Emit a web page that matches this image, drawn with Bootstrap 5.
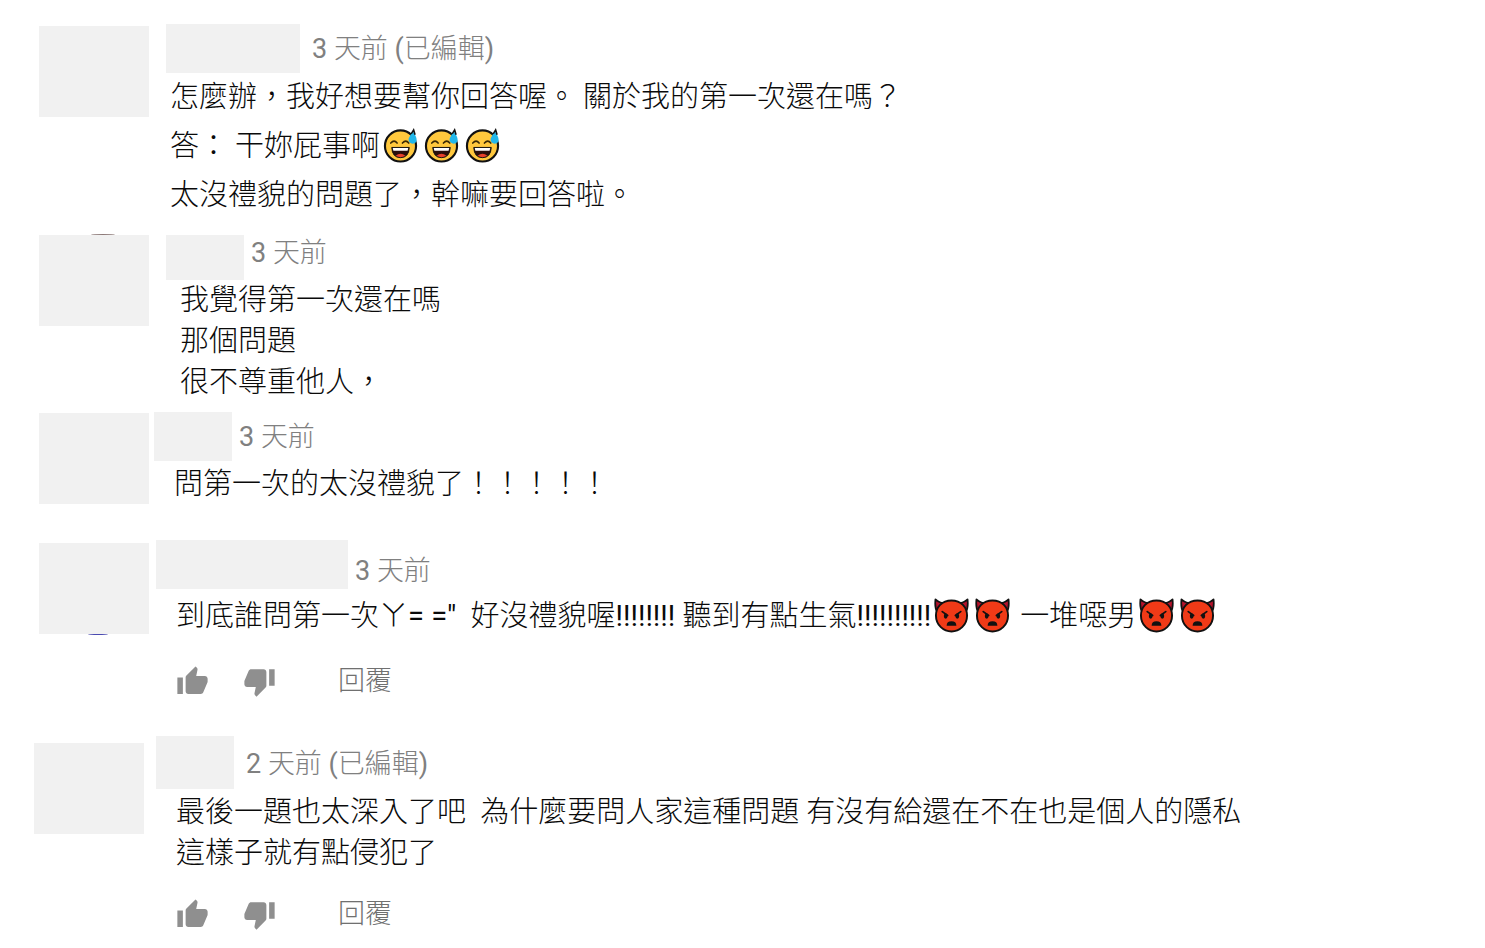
<!DOCTYPE html>
<html lang="zh-Hant">
<head>
<meta charset="utf-8">
<meta name="viewport" content="width=device-width, initial-scale=1">
<title>留言</title>
<link href="https://cdn.jsdelivr.net/npm/bootstrap@5.3.0/dist/css/bootstrap.min.css" rel="stylesheet">
<style>
  body { background: #fff; color: #0a0a0a; font-family: Roboto, "Noto Sans CJK TC", sans-serif; font-size: 29px; font-weight: 300; }
  .thread { padding: 24px 34px 10px; }
  .comment { padding-left: 5px; }
  .comment-flush { padding-left: 0; }
  .after-9 { padding-bottom: 9px; } .after-15 { padding-bottom: 15px; } .after-35 { padding-bottom: 35px; }
  .avatar { position: relative; width: 110px; height: 91px; background: #f1f1f1; }
  .drop-1 { margin-top: 1px; } .drop-2 { margin-top: 2px; } .drop-3 { margin-top: 3px; } .drop-7 { margin-top: 7px; }
  .avatar-peek-top::before, .avatar-peek-bottom::after { content: ""; position: absolute; height: 2px; }
  .avatar-peek-top::before { left: 52px; top: -1px; width: 24px; border-top: 1px solid #8d7a78; border-radius: 50%; }
  .avatar-peek-bottom::after { left: 49px; bottom: -1px; width: 20px; border-bottom: 1px solid #4a4ab0; border-radius: 50%; }
  .author { background: #f1f1f1; }
  .author-xs { width: 78px; }
  .author-md { width: 134px; }
  .author-lg { width: 192px; }
  .stamp { color: #808080; font-size: 27px; line-height: 40px; }
  .stamp-high { line-height: 36px; }
  .stamp-tall { line-height: 49px; }
  .stamp-row { height: 49px; }
  .stamp-row-sm { height: 45px; }
  .stamp-row-lg { height: 53px; }
  .words { line-height: 41px; white-space: pre-wrap; }
  .words-loose { line-height: 49px; }
  .emo { width: 35px; height: 35px; margin: 0 3px; vertical-align: -7px; }
  .actions { padding-top: 20px; }
  .tool { padding: 0; border: 0; background: none; color: #8f8f8f; line-height: 1; }
  .tool svg { display: block; width: 33px; height: 33px; fill: currentColor; }
  .tool-down { margin-left: 34px; }
  .reply { font-size: 27px; line-height: 40px; font-weight: 300; color: #707070; margin-left: 62px; }
  .g-5 { margin-left: 5px; } .g-7 { margin-left: 7px; } .g-12 { margin-left: 12px; } .g-17 { margin-left: 17px; }
  .in-4 { padding-left: 4px; } .in-14 { padding-left: 14px; } .in-20 { padding-left: 20px; }
</style>
</head>
<body>
<svg class="d-none" aria-hidden="true">
  <symbol id="sweat" viewBox="0 0 36 36">
    <circle cx="18" cy="18.500" r="16" fill="#ffc83d" stroke="#111" stroke-width="2.200"/>
    <path d="M8 15.500q3.500-4 6.500 0M20 15.500q3.500-4 6.500 0" fill="none" stroke="#3a2a05" stroke-width="1.600" stroke-linecap="round"/>
    <path d="M9 20h18q-.5 10.500-9 10.500T9 20z" fill="#2a0f0c" stroke="#111" stroke-width="1"/>
    <path d="M10 20.500h16l-.7 3h-14.600z" fill="#fff"/>
    <path d="M13 28.500q5-4 10 0-5 3-10 0z" fill="#e8402a"/>
    <path d="M30.500 3q5 7 4 10.500-1.500 3-5 2.500-4-1.500-3-5.500z" fill="#22b7ea"/>
    <path d="M29 6l2.500-4 1.500 5" fill="none" stroke="#111" stroke-width="1.600"/>
  </symbol>
  <symbol id="imp" viewBox="0 0 36 36">
    <path d="M1.500 1.500q-1 9 2 13l8-9q-6 0-10-4zM34.500 1.500q1 9-2 13l-8-9q6 0 10-4z" fill="#b5122b" stroke="#111" stroke-width="1.800" stroke-linejoin="round"/>
    <path d="M18 2.500C8 2.500 2 9.500 2 18c0 10 8 16.500 16 16.500S34 28 34 18C34 9.500 28 2.500 18 2.500z" fill="#f03a17" stroke="#111" stroke-width="2"/>
    <path d="M8.500 14l5.500 4M27.500 14l-5.500 4" stroke="#111" stroke-width="1.800" stroke-linecap="round"/>
    <ellipse cx="12" cy="18.500" rx="1.900" ry="2.800" fill="#111"/><ellipse cx="24" cy="18.500" rx="1.900" ry="2.800" fill="#111"/>
    <path d="M13 28.500q0-4.500 5-4.500t5 4.500z" fill="#111"/>
  </symbol>
  <symbol id="up" viewBox="0 0 24 24"><path d="M1 21h4V9H1v12zm22-11c0-1.100-.9-2-2-2h-6.310l.95-4.570.03-.32c0-.41-.17-.79-.44-1.060L14.170 1 7.590 7.590C7.220 7.950 7 8.450 7 9v10c0 1.100.9 2 2 2h9c.83 0 1.540-.5 1.840-1.220l3.020-7.050c.09-.23.140-.47.140-.73v-2z"/></symbol>
  <symbol id="down" viewBox="0 0 24 24"><path d="M15 3H6c-.83 0-1.540.5-1.840 1.220l-3.020 7.050c-.09.23-.14.470-.14.730v2c0 1.100.9 2 2 2h6.310l-.95 4.570-.03.320c0 .41.170.79.440 1.060L9.830 23l6.590-6.590c.36-.36.580-.86.580-1.410V5c0-1.100-.9-2-2-2zm4 0v12h4V3h-4z"/></symbol>
</svg>

<main class="thread">
  <article class="comment after-15 d-flex align-items-start">
    <div class="avatar drop-2 flex-shrink-0"></div>
    <div class="g-17 flex-grow-1">
      <header class="stamp-row d-flex align-items-center"><span class="author author-md align-self-stretch"></span><span class="stamp g-12"><span class="fw-normal">3 </span>天前 <span class="fw-normal">(</span>已編輯<span class="fw-normal">)</span></span></header>
      <p class="words words-loose in-4 mb-0">怎麼辦，我好想要幫你回答喔。 關於我的第一次還在嗎？
答： 干妳屁事啊<svg class="emo" role="img" aria-label="苦笑"><use href="#sweat"/></svg><svg class="emo" role="img" aria-label="苦笑"><use href="#sweat"/></svg><svg class="emo" role="img" aria-label="苦笑"><use href="#sweat"/></svg>
太沒禮貌的問題了，幹嘛要回答啦。</p>
    </div>
  </article>

  <article class="comment after-9 d-flex align-items-start">
    <div class="avatar avatar-peek-top flex-shrink-0"></div>
    <div class="g-17 flex-grow-1">
      <header class="stamp-row-sm d-flex align-items-start"><span class="author author-xs align-self-stretch"></span><span class="stamp stamp-high g-7"><span class="fw-normal">3 </span>天前</span></header>
      <p class="words in-14 mb-0">我覺得第一次還在嗎
那個問題
很不尊重他人，</p>
    </div>
  </article>

  <article class="comment after-35 d-flex align-items-start">
    <div class="avatar drop-1 flex-shrink-0"></div>
    <div class="g-5 flex-grow-1">
      <header class="stamp-row d-flex align-items-center"><span class="author author-xs align-self-stretch"></span><span class="stamp g-7"><span class="fw-normal">3 </span>天前</span></header>
      <p class="words in-20 drop-3 mb-0">問第一次的太沒禮貌了！！！！！</p>
    </div>
  </article>

  <article class="comment after-35 d-flex align-items-start">
    <div class="avatar avatar-peek-bottom drop-3 flex-shrink-0"></div>
    <div class="g-7 flex-grow-1">
      <header class="stamp-row d-flex align-items-end"><span class="author author-lg align-self-stretch"></span><span class="stamp stamp-high g-7"><span class="fw-normal">3 </span>天前</span></header>
      <p class="words words-loose in-20 drop-3 mb-0">到底誰問第一次ㄚ<span class="fw-normal">= ="</span>  好沒禮貌喔<span class="fw-normal">!!!!!!!! </span>聽到有點生氣<span class="fw-normal">!!!!!!!!!!</span><svg class="emo" role="img" aria-label="生氣"><use href="#imp"/></svg><svg class="emo" role="img" aria-label="生氣"><use href="#imp"/></svg> 一堆噁男<svg class="emo" role="img" aria-label="生氣"><use href="#imp"/></svg><svg class="emo" role="img" aria-label="生氣"><use href="#imp"/></svg></p>
      <div class="actions d-flex align-items-center in-20">
        <button class="tool" type="button" aria-label="喜歡"><svg><use href="#up"/></svg></button>
        <button class="tool tool-down" type="button" aria-label="不喜歡"><svg><use href="#down"/></svg></button>
        <button class="tool reply" type="button">回覆</button>
      </div>
    </div>
  </article>

  <article class="comment comment-flush d-flex align-items-start">
    <div class="avatar drop-7 flex-shrink-0"></div>
    <div class="g-12 flex-grow-1">
      <header class="stamp-row-lg d-flex align-items-end"><span class="author author-xs align-self-stretch"></span><span class="stamp stamp-tall g-12"><span class="fw-normal">2 </span>天前 <span class="fw-normal">(</span>已編輯<span class="fw-normal">)</span></span></header>
      <p class="words in-20 drop-3 mb-0">最後一題也太深入了吧  為什麼要問人家這種問題 有沒有給還在不在也是個人的隱私
這樣子就有點侵犯了</p>
      <div class="actions d-flex align-items-center in-20">
        <button class="tool" type="button" aria-label="喜歡"><svg><use href="#up"/></svg></button>
        <button class="tool tool-down" type="button" aria-label="不喜歡"><svg><use href="#down"/></svg></button>
        <button class="tool reply" type="button">回覆</button>
      </div>
    </div>
  </article>
</main>
<script src="https://cdn.jsdelivr.net/npm/bootstrap@5.3.0/dist/js/bootstrap.bundle.min.js"></script>
</body>
</html>
